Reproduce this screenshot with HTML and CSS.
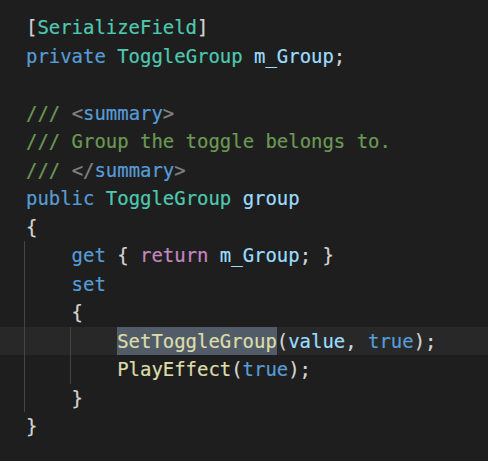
FILE: index.html
```html
<!DOCTYPE html>
<html>
<head>
<meta charset="utf-8">
<link rel="stylesheet" href="styles.css">
</head>
<body>
<div class="editor">
  <div class="line"><span class="code"><span class="p">[</span><span class="t">SerializeField</span><span class="p">]</span></span></div>
  <div class="line"><span class="code"><span class="k">private</span> <span class="t">ToggleGroup</span> <span class="v">m_Group</span><span class="p">;</span></span></div>
  <div class="line"><span class="code"> </span></div>
  <div class="line"><span class="code"><span class="c">///</span> <span class="x">&lt;</span><span class="k">summary</span><span class="x">&gt;</span></span></div>
  <div class="line"><span class="code"><span class="c">/// Group the toggle belongs to.</span></span></div>
  <div class="line"><span class="code"><span class="c">///</span> <span class="x">&lt;/</span><span class="k">summary</span><span class="x">&gt;</span></span></div>
  <div class="line"><span class="code"><span class="k">public</span> <span class="t">ToggleGroup</span> <span class="v">group</span></span></div>
  <div class="line"><span class="code"><span class="p">{</span></span></div>
  <div class="line"><span class="ind guide"></span><span class="code"><span class="k">get</span> <span class="p">{</span> <span class="r">return</span> <span class="v">m_Group</span><span class="p">;</span> <span class="p">}</span></span></div>
  <div class="line"><span class="ind guide"></span><span class="code"><span class="k">set</span></span></div>
  <div class="line"><span class="ind guide"></span><span class="code"><span class="p">{</span></span></div>
  <div class="line current"><span class="ind guide"></span><span class="ind guide"></span><span class="code"><span class="f sel">SetToggleGroup</span><span class="p">(</span><span class="v">value</span><span class="p">,</span> <span class="k">true</span><span class="p">);</span></span></div>
  <div class="line"><span class="ind guide"></span><span class="ind guide"></span><span class="code"><span class="f">PlayEffect</span><span class="p">(</span><span class="k">true</span><span class="p">);</span></span></div>
  <div class="line"><span class="ind guide"></span><span class="code"><span class="p">}</span></span></div>
  <div class="line"><span class="code"><span class="p">}</span></span></div>
</div>
</body>
</html>
```
FILE: styles.css
```css
html, body {
  margin: 0;
  padding: 0;
  background: #1e1e1e;
}
body {
  width: 488px;
  height: 461px;
  overflow: hidden;
}
.editor {
  padding-top: 13px;
  font-family: "DejaVu Sans Mono", "Liberation Mono", monospace;
  font-size: 18.94px;
  color: #d4d4d4;
  -webkit-text-stroke: 0.2px currentColor;
}
.line {
  display: flex;
  height: 28.5px;
  line-height: 28.5px;
  padding-left: 24px;
  white-space: pre;
}
.line.current {
  background: #282828;
}
.ind {
  flex: none;
  width: 4ch;
  height: 28.5px;
}
.guide {
  background: linear-gradient(#454545, #454545) no-repeat 0 0 / 1px 100%;
}
.code {
  flex: none;
  padding-left: 2px;
}
.sel {
  display: inline-block;
  line-height: 28.5px;
  background: #525c69;
}
.p { color: #d4d4d4; }
.k { color: #569cd6; }
.t { color: #4ec9b0; }
.v { color: #9cdcfe; }
.c { color: #6a9955; }
.x { color: #808080; }
.r { color: #c586c0; }
.f { color: #dcdcaa; }
```
